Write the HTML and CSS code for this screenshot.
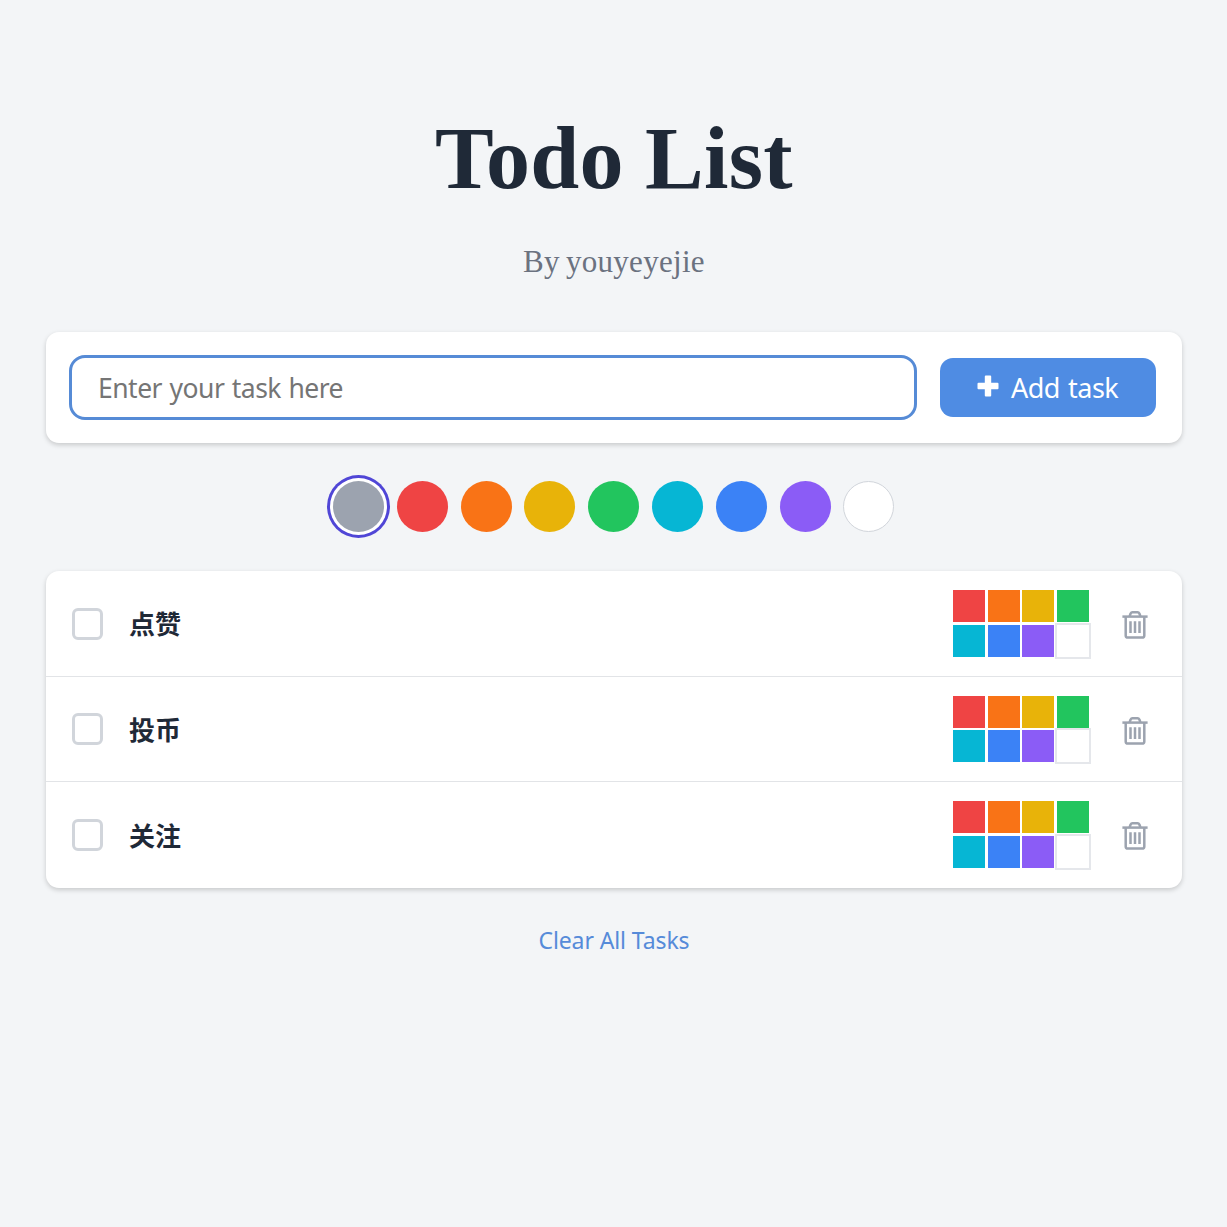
FILE: index.html
```html
<!DOCTYPE html>
<html lang="en">
<head>
<meta charset="utf-8">
<title>Todo List</title>
<link rel="stylesheet" href="styles.css">
</head>
<body>
<svg class="defs" width="0" height="0">
  <symbol id="trash" viewBox="0 0 26 28">
    <g fill="none" stroke="currentColor" stroke-width="2.5" stroke-linejoin="round">
      <path d="M0.4 5.6H25.6"/>
      <path d="M3.7 5.6V24.4Q3.7 26.6 5.9 26.6H20.1Q22.3 26.6 22.3 24.4V5.6"/>
      <path d="M7.6 5.2L8.6 2.5Q9.2 1.3 10.4 1.3H15.6Q16.8 1.3 17.4 2.5L18.4 5.2"/>
      <path d="M8.5 10.3V22M13 10.3V22M17.5 10.3V22"/>
    </g>
  </symbol>
</svg>
<main class="app">
  <header class="header">
    <h1 class="title">Todo List</h1>
    <p class="subtitle">By youyeyejie</p>
  </header>
  <form class="task-form">
    <input class="task-input" type="text" placeholder="Enter your task here">
    <button class="add-button" type="button">
      <svg class="plus" viewBox="0 0 22 22"><path d="M8.8 0.5H13.2Q14.2 0.5 14.2 1.5V7.8H20.5Q21.5 7.8 21.5 8.8V13.2Q21.5 14.2 20.5 14.2H14.2V20.5Q14.2 21.5 13.2 21.5H8.8Q7.8 21.5 7.8 20.5V14.2H1.5Q0.5 14.2 0.5 13.2V8.8Q0.5 7.8 1.5 7.8H7.8V1.5Q7.8 0.5 8.8 0.5Z" fill="currentColor"/></svg>
      <span class="add-label">Add task</span>
    </button>
  </form>
  <div class="palette">
    <span class="dot gray selected"></span>
    <span class="dot red"></span>
    <span class="dot orange"></span>
    <span class="dot yellow"></span>
    <span class="dot green"></span>
    <span class="dot cyan"></span>
    <span class="dot blue"></span>
    <span class="dot purple"></span>
    <span class="dot white"></span>
  </div>
  <ul class="tasks">
    <li class="task">
      <span class="check"></span>
      <span class="name">点赞</span>
      <div class="swatches"><i class="red"></i><i class="orange"></i><i class="yellow"></i><i class="green"></i><i class="cyan"></i><i class="blue"></i><i class="purple"></i><i class="white"></i></div>
      <svg class="trash"><use href="#trash"/></svg>
    </li>
    <li class="task">
      <span class="check"></span>
      <span class="name">投币</span>
      <div class="swatches"><i class="red"></i><i class="orange"></i><i class="yellow"></i><i class="green"></i><i class="cyan"></i><i class="blue"></i><i class="purple"></i><i class="white"></i></div>
      <svg class="trash"><use href="#trash"/></svg>
    </li>
    <li class="task">
      <span class="check"></span>
      <span class="name">关注</span>
      <div class="swatches"><i class="red"></i><i class="orange"></i><i class="yellow"></i><i class="green"></i><i class="cyan"></i><i class="blue"></i><i class="purple"></i><i class="white"></i></div>
      <svg class="trash"><use href="#trash"/></svg>
    </li>
  </ul>
  <a class="clear">Clear All Tasks</a>
</main>
</body>
</html>
```
FILE: styles.css
```css
* { box-sizing: border-box; }
body {
  margin: 0;
  min-height: 100vh;
  background: #f3f5f7;
  color: #1f2937;
  font-family: "Noto Sans", "Noto Sans CJK SC", sans-serif;
}
.defs { display: block; height: 0; }
.app {
  display: flex;
  flex-direction: column;
  width: 1136px;
  margin-left: 46px;
  padding-top: 102px;
}
.header {
  height: 230px;
  text-align: center;
  font-family: "Liberation Serif", serif;
}
.title {
  margin: 0;
  padding-top: 1px;
  font-size: 88px;
  line-height: 112px;
  font-weight: 700;
  letter-spacing: 0.3px;
  word-spacing: -1px;
}
.subtitle {
  margin: 25px 0 0;
  color: #6b7280;
  font-size: 31px;
  line-height: 44px;
  letter-spacing: 0.3px;
  word-spacing: -2px;
}
.task-form {
  display: flex;
  align-items: center;
  gap: 23px;
  height: 111px;
  padding: 0 26px 0 23px;
  background: #fff;
  border-radius: 13px;
  box-shadow: 0 2px 5px rgba(0, 0, 0, 0.18);
}
.task-input {
  flex: 1;
  height: 65px;
  padding: 0 26px;
  border: 3px solid #568bd6;
  border-radius: 16px;
  outline: none;
  background: #fff;
  font: 26.5px "Noto Sans", sans-serif;
  letter-spacing: -0.5px;
  word-spacing: 1px;
}
.task-input::placeholder { color: #757575; opacity: 1; }
.add-button {
  display: flex;
  align-items: center;
  gap: 12px;
  width: 216px;
  height: 59px;
  padding: 0 0 0 37px;
  border: 0;
  border-radius: 13px;
  background: #4f8ce3;
  color: #fff;
  font: 27px "Noto Sans", sans-serif;
}
.plus { width: 22px; height: 22px; margin-bottom: 4px; }
.add-label { letter-spacing: -0.5px; word-spacing: 1.5px; white-space: nowrap; }
.palette {
  display: flex;
  gap: 12.8px;
  height: 127px;
  padding: 38px 0 0 287px;
}
.dot { width: 51px; height: 51px; border-radius: 50%; }
.dot.selected { box-shadow: 0 0 0 3px #fff, 0 0 0 6px #5046d6; }
.dot.white { border: 1px solid #d1d5db; }
.gray { background: #9ca3af; }
.red { background: #ef4444; }
.orange { background: #f97316; }
.yellow { background: #e8b309; }
.green { background: #22c55e; }
.cyan { background: #06b6d4; }
.blue { background: #3b82f6; }
.purple { background: #8b5cf6; }
.white { background: #fff; }
.tasks {
  margin: 1px 0 0;
  padding: 0;
  list-style: none;
  background: #fff;
  border-radius: 13px;
  box-shadow: 0 2px 5px rgba(0, 0, 0, 0.18);
}
.task {
  display: flex;
  align-items: center;
  height: 105.7px;
  padding: 0 34px 0 26px;
  border-bottom: 1px solid #e2e4e7;
}
.task:last-child { border-bottom-color: transparent; }
.check {
  width: 31px;
  height: 32px;
  margin-top: 0.4px;
  border: 3px solid #d1d5db;
  border-radius: 6px;
}
.name {
  flex: 1;
  margin-left: 26px;
  font-family: "Noto Sans CJK SC", sans-serif;
  font-size: 26px;
  line-height: 36px;
  font-weight: 700;
}
.swatches {
  display: grid;
  grid-template-columns: repeat(4, 32px);
  grid-template-rows: repeat(2, 32px);
  gap: 2.6px;
  margin-right: 33px;
}
.swatches .white { box-shadow: 0 0 0 2px #e5e7eb; }
.trash { width: 26px; height: 28px; margin-top: 3px; color: #9ca3af; }
.clear {
  align-self: center;
  margin-top: 36px;
  color: #568bd9;
  font-size: 23px;
  line-height: 32px;
  letter-spacing: -0.1px;
}
```
